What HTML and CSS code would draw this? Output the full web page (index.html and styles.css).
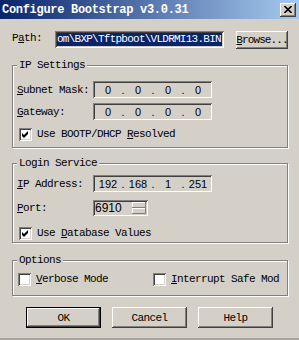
FILE: index.html
```html
<!DOCTYPE html>
<html lang="en">
<head>
  <meta charset="UTF-8" />
  <title>Configure Bootstrap v3.0.31</title>
  <link rel="stylesheet" href="styles.css">
</head>
<body>
  <div class="dialog">
    <div class="titlebar">
      <span class="title">Configure Bootstrap v3.0.31</span>
      <button class="close">
        <svg width="8" height="7" viewBox="0 0 8 7"><path d="M0.5 0 L7.5 7 M7.5 0 L0.5 7" stroke="#000" stroke-width="1.6"/></svg>
      </button>
    </div>

    <div class="path-row">
      <label class="path-label">P<u>a</u>th:</label>
      <div class="edit path-edit"><span class="sel">om\BXP\Tftpboot\VLDRMI13.BIN</span></div>
      <button class="btn browse"><u>B</u>rowse...</button>
    </div>

    <div class="group ip-group">
      <div class="group-title">IP Settings</div>
      <div class="field-row subnet">
        <label><u>S</u>ubnet Mask:</label>
        <div class="edit ip"><span>0</span><i>.</i><span>0</span><i>.</i><span>0</span><i>.</i><span>0</span></div>
      </div>
      <div class="field-row gateway">
        <label><u>G</u>ateway:</label>
        <div class="edit ip"><span>0</span><i>.</i><span>0</span><i>.</i><span>0</span><i>.</i><span>0</span></div>
      </div>
      <div class="check bootp">
        <span class="box"><svg width="9" height="9" viewBox="0 0 9 9"><path d="M1 3 L3 5 L7 1 L7 4 L3 8 L1 6 Z" fill="#000"/></svg></span>
        <span>Use BOOTP/DHCP <u>R</u>esolved</span>
      </div>
    </div>

    <div class="group login-group">
      <div class="group-title">Login Service</div>
      <div class="field-row ipaddr">
        <label><u>I</u>P Address:</label>
        <div class="edit ip"><span>192</span><i>.</i><span>168</span><i>.</i><span>1</span><i>.</i><span>251</span></div>
      </div>
      <div class="field-row port">
        <label><u>P</u>ort:</label>
        <div class="edit port-edit">
          <span class="port-val">6910</span>
          <span class="spin"><b></b><b></b></span>
        </div>
      </div>
      <div class="check dbvals">
        <span class="box"><svg width="9" height="9" viewBox="0 0 9 9"><path d="M1 3 L3 5 L7 1 L7 4 L3 8 L1 6 Z" fill="#000"/></svg></span>
        <span>Use <u>D</u>atabase Values</span>
      </div>
    </div>

    <div class="group options-group">
      <div class="group-title">Options</div>
      <div class="options-row">
        <div class="check verbose">
          <span class="box"></span>
          <span><u>V</u>erbose Mode</span>
        </div>
        <div class="check interrupt">
          <span class="box"></span>
          <span><u>I</u>nterrupt Safe Mod</span>
        </div>
      </div>
    </div>

    <div class="buttons">
      <button class="btn default">OK</button>
      <button class="btn">Cancel</button>
      <button class="btn">Help</button>
    </div>
  </div>
</body>
</html>
```

FILE: styles.css
```css
* { box-sizing: border-box; }
body {
  margin: 0;
  background: #d4d0c8;
  font-family: "Liberation Mono", "DejaVu Sans Mono", monospace;
  font-size: 11px;
  letter-spacing: -0.6px;
  color: #000;
}
u { text-decoration: underline; text-underline-offset: 1px; }
button {
  font: inherit;
  letter-spacing: inherit;
  color: #000;
  padding: 0;
  border: none;
  background: #d4d0c8;
}
.dialog {
  width: 299px;
  height: 340px;
  overflow: hidden;
  border-bottom: 2px solid #a9a59e;
}
.titlebar {
  height: 19px;
  display: flex;
  align-items: center;
  padding: 0 3px 0 2px;
  background: linear-gradient(to right, #0a246a, #a6caf0);
}
.title {
  color: #fff;
  font-weight: bold;
  font-size: 12px;
  letter-spacing: -0.3px;
}
.close {
  margin-left: auto;
  width: 16px;
  height: 14px;
  display: flex;
  align-items: center;
  justify-content: center;
  box-shadow: inset -1px -1px #404040, inset 1px 1px #fff, inset -2px -2px #808080;
}

/* raised / sunken edges */
.btn {
  box-shadow: inset -1px -1px #404040, inset 1px 1px #fff, inset -2px -2px #808080;
  white-space: nowrap;
}
.edit {
  box-shadow: inset 1px 1px #808080, inset -1px -1px #fff, inset 2px 2px #404040, inset -2px -2px #d4d0c8;
}

.path-row {
  display: flex;
  align-items: flex-start;
  margin-top: 12px;
  padding-left: 12px;
}
.path-label { width: 43px; line-height: 15px; }
.path-edit {
  width: 169px;
  height: 17px;
  padding: 2px;
  overflow: hidden;
}
.sel {
  display: block;
  height: 13px;
  line-height: 13px;
  background: #0a246a;
  color: #fff;
  white-space: nowrap;
  overflow: hidden;
  letter-spacing: -0.75px;
}
.browse {
  margin-left: 12px;
  width: 52px;
  height: 18px;
  letter-spacing: -0.9px;
}

.group {
  margin: 0 11px 0 12px;
  border: 1px solid #808080;
  box-shadow: 1px 1px 0 #fff, inset 1px 1px 0 #fff;
  padding: 0 0 0 4px;
}
.group-title {
  display: table;
  margin-top: -7px;
  padding: 0 2px;
  line-height: 12px;
  background: #d4d0c8;
}
.ip-group { margin-top: 16px; padding-bottom: 6px; }
.login-group { margin-top: 15px; padding-bottom: 2px; }
.options-group { margin-top: 17px; padding-bottom: 9px; }

.field-row {
  display: flex;
  align-items: center;
}
.field-row label { width: 76px; }
.subnet { margin-top: 10px; }
.gateway { margin-top: 5px; }
.ipaddr { margin-top: 6px; }
.port { margin-top: 8px; }

.ip {
  width: 119px;
  height: 17px;
  display: flex;
  align-items: center;
  padding-left: 3px;
  font-family: "Liberation Sans", Arial, sans-serif;
  font-size: 11px;
  letter-spacing: 0;
}
.ip span { width: 24px; text-align: center; }
.ip i { width: 6px; font-style: normal; text-align: center; }

.port-edit {
  width: 55px;
  height: 16px;
  display: flex;
  align-items: center;
  padding: 2px;
  font-family: "Liberation Sans", Arial, sans-serif;
  font-size: 12px;
  letter-spacing: 0;
}
.spin {
  margin-left: auto;
  width: 14px;
  height: 12px;
  display: flex;
  flex-direction: column;
}
.spin b {
  flex: 1;
  box-shadow: inset -1px -1px #808080, inset 1px 1px #fff;
}

.check {
  display: flex;
  align-items: center;
  line-height: 13px;
  white-space: nowrap;
}
.check .box {
  width: 13px;
  height: 13px;
  margin-right: 5px;
  background: #fff;
  display: flex;
  align-items: center;
  justify-content: center;
  box-shadow: inset 1px 1px #808080, inset -1px -1px #fff, inset 2px 2px #404040, inset -2px -2px #d4d0c8;
}
.bootp { margin: 8px 0 0 2px; }
.dbvals { margin: 11px 0 0 2px; }
.options-row {
  display: flex;
  margin-top: 7px;
}
.verbose { width: 135px; margin-left: 1px; }

.buttons {
  display: flex;
  gap: 11px;
  margin-top: 11px;
  padding-left: 26px;
}
.buttons .btn {
  width: 75px;
  height: 21px;
}
.buttons .default {
  box-shadow: inset 0 0 0 1px #000, inset -2px -2px #404040, inset 2px 2px #fff, inset -3px -3px #808080;
}
```
